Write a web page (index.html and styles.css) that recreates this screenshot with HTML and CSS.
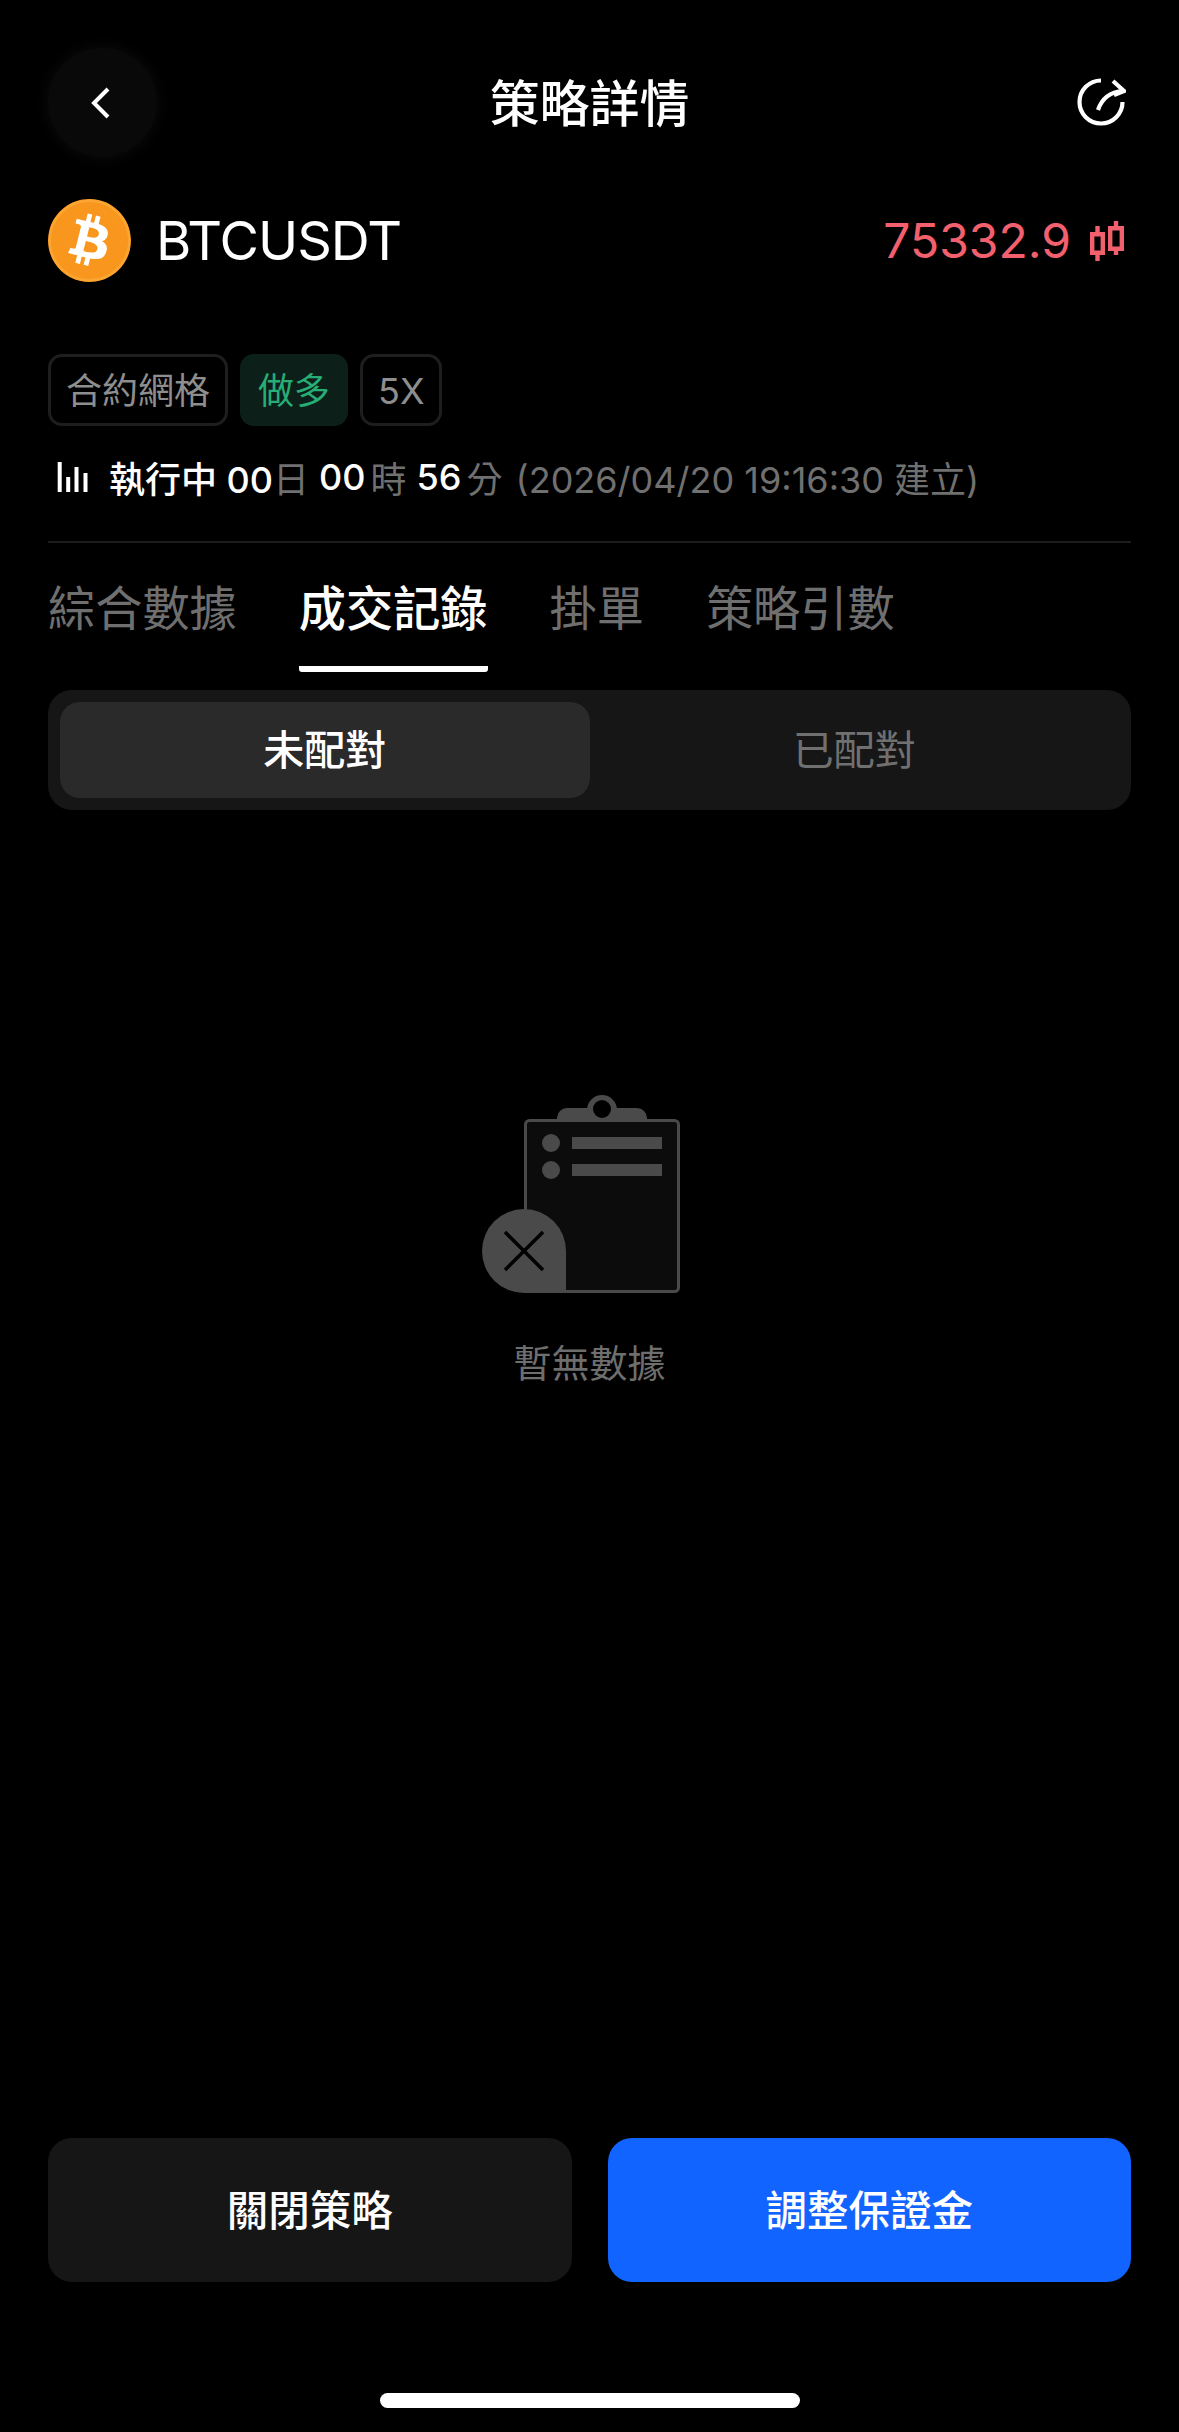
FILE: index.html
```html
<!DOCTYPE html>
<html lang="zh-Hant">
<head>
  <meta charset="UTF-8">
  <title>策略詳情</title>
  <link rel="stylesheet" href="styles.css">
</head>
<body>
  <div class="page">
    <header class="topbar">
      <div class="back-btn">
        <svg class="back-icon" viewBox="0 0 20 32"><path d="M18 2 4 16l14 14"/></svg>
      </div>
      <h1>策略詳情</h1>
      <svg class="share-icon" viewBox="0 0 50 50">
        <path class="line" d="M25 2.500A21.500 21.500 0 1 0 46.500 24"/>
        <path class="line" d="M22 32C25 23 32 14 47 13"/>
        <path class="line" d="M37 3 48 13 38 17"/>
      </svg>
    </header>

    <section class="symbol-row">
      <svg class="coin" viewBox="0 0 24 24">
        <circle cx="12" cy="12" r="8" fill="#fff"/>
        <path fill="#f8961d" d="M23.638 14.904c-1.602 6.43-8.113 10.34-14.542 8.736C2.67 22.05-1.244 15.525.362 9.105 1.962 2.67 8.475-1.243 14.9.358c6.43 1.605 10.342 8.115 8.738 14.548v-.002zm-6.35-4.613c.24-1.59-.974-2.45-2.64-3.03l.54-2.153-1.315-.33-.525 2.107c-.345-.087-.705-.167-1.064-.25l.526-2.127-1.32-.33-.54 2.165c-.285-.067-.565-.132-.84-.2l-1.815-.45-.35 1.407s.975.225.955.236c.535.136.63.486.615.766l-1.477 5.92c-.075.166-.24.406-.614.314.015.02-.96-.24-.96-.24l-.66 1.51 1.71.426.93.242-.54 2.19 1.32.327.54-2.17c.36.1.705.19 1.05.273l-.51 2.154 1.32.33.545-2.19c2.24.427 3.93.257 4.64-1.774.57-1.637-.03-2.58-1.217-3.196.854-.193 1.5-.76 1.68-1.93h.01zm-3.01 4.22c-.404 1.64-3.157.75-4.05.53l.72-2.9c.896.23 3.757.67 3.33 2.37zm.41-4.24c-.37 1.49-2.662.735-3.405.55l.654-2.64c.744.18 3.137.524 2.75 2.084v.006z"/>
        <circle cx="12" cy="12" r="11.500" fill="none" stroke="#fba633" stroke-width=".7"/>
      </svg>
      <span class="symbol">BTCUSDT</span>
      <span class="price">75332.9</span>
      <svg class="candles" viewBox="0 0 34 40">
        <path d="M7.500 5v6M7.500 34v6M2.200 13.200h10.600v18.600H2.200zM26 0v5M26 30v4M20.200 7.200h11.600v20.600H20.200z"/>
      </svg>
    </section>

    <div class="tags">
      <span class="tag">合約網格</span>
      <span class="tag tag-long">做多</span>
      <span class="tag">5X</span>
    </div>

    <div class="status">
      <svg class="bars" viewBox="0 0 32 30">
        <path d="M2.700 0v30M11.200 15v15M19.500 5v25M28.500 11v19"/>
      </svg>
      <span class="on">執行中 00</span><span class="off tight">日</span>
      <span class="on">00</span><span class="off">時</span>
      <span class="on">56</span><span class="off">分</span>
      <span class="off date">(2026/04/20 19:16:30 建立)</span>
    </div>

    <div class="divider"></div>

    <nav class="tabs">
      <span class="tab">綜合數據</span>
      <span class="tab active">成交記錄</span>
      <span class="tab">掛單</span>
      <span class="tab">策略引數</span>
    </nav>

    <div class="segment">
      <div class="seg-item selected">未配對</div>
      <div class="seg-item">已配對</div>
    </div>

    <main class="empty">
      <svg class="empty-icon" viewBox="0 0 200 200">
        <path fill="#4a4a4a" d="M77 25v-2a10 10 0 0 1 10-10h70a10 10 0 0 1 10 10v2z"/>
        <circle cx="122" cy="15" r="15" fill="#4a4a4a"/>
        <circle cx="122" cy="14" r="9" fill="#000"/>
        <rect x="45.500" y="25.500" width="153" height="171" rx="4" fill="#0c0c0c" stroke="#4a4a4a" stroke-width="3"/>
        <circle cx="71" cy="48" r="9" fill="#4a4a4a"/>
        <circle cx="71" cy="75" r="9" fill="#4a4a4a"/>
        <rect x="92" y="42" width="90" height="12" fill="#4a4a4a"/>
        <rect x="92" y="69" width="90" height="12" fill="#4a4a4a"/>
        <path fill="#4a4a4a" d="M86 198H44a42 42 0 1 1 42-42z"/>
        <path d="M25 137l38 38M63 137l-38 38" stroke="#000" stroke-width="3.500" fill="none"/>
      </svg>
      <p class="empty-text">暫無數據</p>
    </main>

    <footer class="actions">
      <button class="btn btn-dark">關閉策略</button>
      <button class="btn btn-blue">調整保證金</button>
    </footer>

    <div class="home-bar"></div>
  </div>
</body>
</html>
```

FILE: styles.css
```css
* {
  box-sizing: border-box;
}

html, body {
  margin: 0;
  background: #000;
}

body {
  font-family: Inter, "Noto Sans CJK TC", sans-serif;
  color: #fff;
}

.page {
  width: 1179px;
  height: 2432px;
  padding: 48px 48px 24px;
  display: flex;
  flex-direction: column;
  overflow: hidden;
}

/* top bar */
.topbar {
  display: grid;
  grid-template-columns: 1fr auto 1fr;
  align-items: center;
  height: 109px;
}

.topbar h1 {
  margin: 0;
  padding-top: 2px;
  font-size: 50px;
  font-weight: 500;
  line-height: 60px;
}

.back-btn {
  width: 109px;
  height: 109px;
  border-radius: 50%;
  background: #090909;
  box-shadow: 0 0 16px #0d0d0d;
  display: flex;
  align-items: center;
  justify-content: center;
}

.back-icon {
  width: 20px;
  height: 32px;
  margin-left: -6px;
  fill: none;
  stroke: #fff;
  stroke-width: 4;
}

.share-icon {
  width: 50px;
  height: 50px;
  justify-self: end;
  margin-right: 5px;
}

.share-icon .line {
  fill: none;
  stroke: #fff;
  stroke-width: 4.200;
}

/* symbol and price */
.symbol-row {
  display: flex;
  align-items: center;
  height: 83px;
  margin-top: 42px;
}

.coin {
  width: 83px;
  height: 83px;
}

.symbol {
  margin-left: 25px;
  font-size: 54px;
  letter-spacing: -1px;
  flex: 1;
}

.price {
  font-size: 48px;
  color: #f2606e;
}

.candles {
  width: 34px;
  height: 40px;
  margin: 0 7px 0 19px;
  fill: none;
  stroke: #f2606e;
  stroke-width: 4.400;
}

/* tags */
.tags {
  display: flex;
  gap: 12px;
  margin-top: 72px;
}

.tag {
  height: 72px;
  padding: 0 15px;
  border: 3px solid #1e1e1e;
  border-radius: 14px;
  font-size: 36px;
  line-height: 68px;
  color: #8e8e8e;
}

.tag-long {
  border-color: #0c1f18;
  background: #0c1f18;
  color: #27ad76;
}

/* running time */
.status {
  display: flex;
  align-items: center;
  height: 44px;
  margin-top: 29px;
  padding-left: 9px;
  font-size: 36px;
  white-space: pre;
}

.bars {
  width: 32px;
  height: 30px;
  margin-right: 20px;
  fill: none;
  stroke: #fff;
  stroke-width: 4;
}

.status .on {
  font-weight: 500;
  color: #fff;
}

.status .off {
  margin-left: 5px;
  color: #707070;
}

.status .off.tight {
  margin-left: 0;
}

.status .off.date {
  margin-left: 13px;
}

.status .on:not(:first-of-type) {
  margin-left: 10px;
}

.divider {
  height: 2px;
  margin-top: 42px;
  background: #1c1c1c;
}

/* tabs */
.tabs {
  display: flex;
  gap: 62px;
  margin-top: 33px;
}

.tab {
  position: relative;
  height: 96px;
  font-size: 47.200px;
  line-height: 65px;
  color: #6f6f6f;
}

.tab.active {
  color: #fff;
  font-weight: 500;
  border-bottom: 6px solid #fff;
  border-radius: 0 0 3px 3px;
}

.segment {
  display: flex;
  height: 120px;
  margin-top: 18px;
  padding: 12px;
  border-radius: 24px;
  background: #161616;
}

.seg-item {
  flex: 1;
  border-radius: 20px;
  font-size: 41px;
  line-height: 96px;
  text-align: center;
  color: #707070;
}

.seg-item.selected {
  background: #2a2a2a;
  color: #fff;
  font-weight: 500;
}

/* empty state */
.empty {
  flex: 1;
  padding-top: 285px;
  display: flex;
  flex-direction: column;
  align-items: center;
}

.empty-icon {
  width: 200px;
  height: 200px;
  margin-right: 19px;
}

.empty-text {
  margin: 42px 0 0;
  font-size: 38px;
  line-height: 52px;
  color: #6e6e6e;
}

/* bottom buttons */
.actions {
  display: flex;
  gap: 36px;
}

.btn {
  flex: 1;
  height: 144px;
  padding-bottom: 5px;
  border: none;
  border-radius: 24px;
  font-family: inherit;
  font-size: 41.500px;
  font-weight: 500;
  color: #fff;
}

.btn-dark {
  background: #161616;
}

.btn-blue {
  background: #1164ff;
}

.home-bar {
  width: 420px;
  height: 15px;
  margin: 111px auto 0;
  border-radius: 8px;
  background: #fff;
}
```
